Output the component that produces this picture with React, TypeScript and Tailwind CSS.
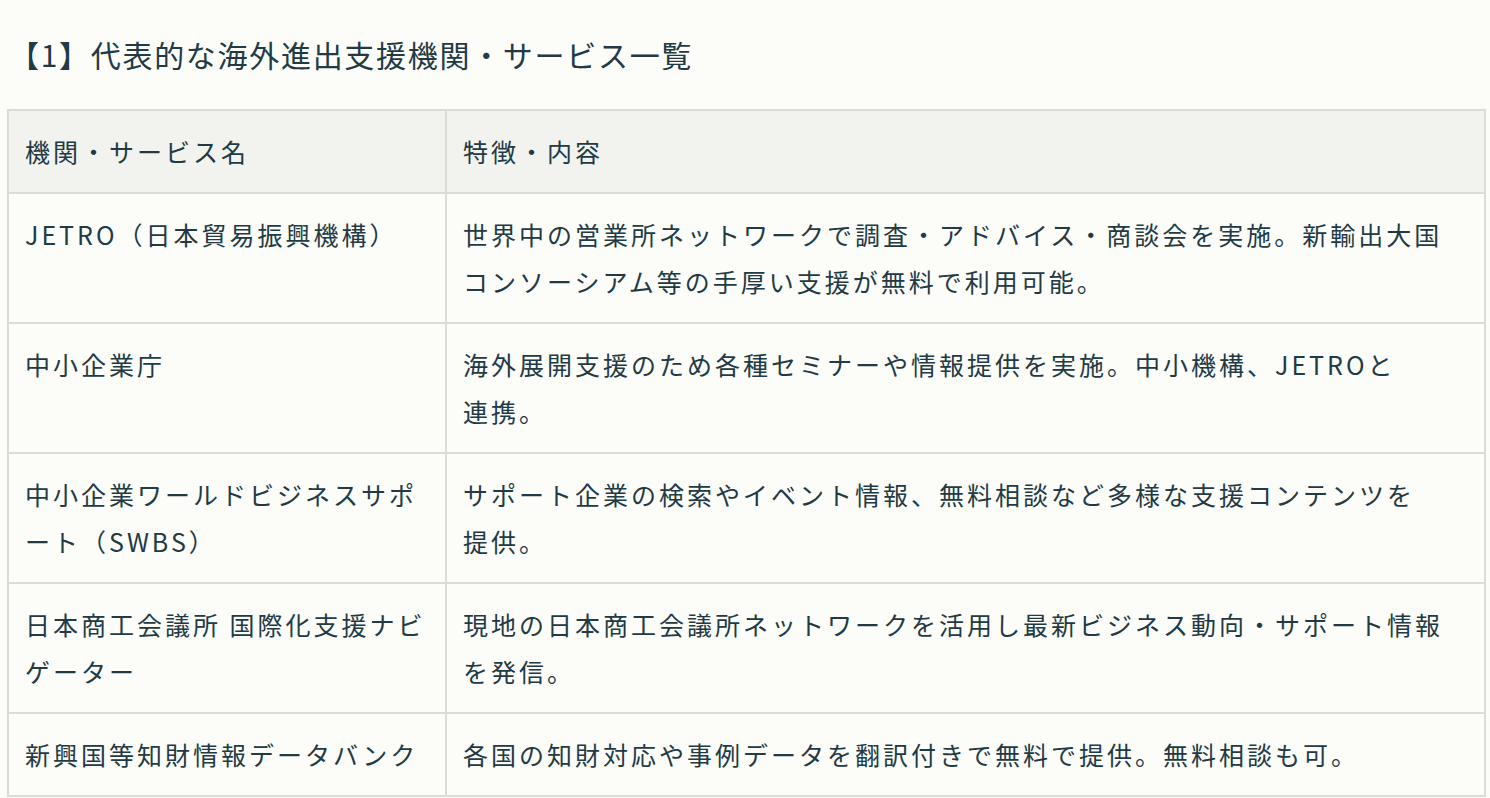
import React from "react";

const rows: { name: React.ReactNode; desc: React.ReactNode }[] = [
  {
    name: "JETRO（日本貿易振興機構）",
    desc: (
      <>
        世界中の営業所ネットワークで調査・アドバイス・商談会を実施。新輸出大国
        <br />
        コンソーシアム等の手厚い支援が無料で利用可能。
      </>
    ),
  },
  {
    name: "中小企業庁",
    desc: (
      <>
        海外展開支援のため各種セミナーや情報提供を実施。中小機構、JETROと
        <br />
        連携。
      </>
    ),
  },
  {
    name: (
      <>
        中小企業ワールドビジネスサポ
        <br />
        ート（SWBS）
      </>
    ),
    desc: (
      <>
        サポート企業の検索やイベント情報、無料相談など多様な支援コンテンツを
        <br />
        提供。
      </>
    ),
  },
  {
    name: (
      <>
        日本商工会議所 国際化支援ナビ
        <br />
        ゲーター
      </>
    ),
    desc: (
      <>
        現地の日本商工会議所ネットワークを活用し最新ビジネス動向・サポート情報
        <br />
        を発信。
      </>
    ),
  },
  {
    name: "新興国等知財情報データバンク",
    desc: "各国の知財対応や事例データを翻訳付きで無料で提供。無料相談も可。",
  },
];

export default function App() {
  return (
    <div
      className="min-h-[798px] w-full bg-[#fcfcf9] text-[#213a44] overflow-hidden"
      style={{ fontFamily: '"Noto Sans CJK JP", "Noto Sans", sans-serif' }}
    >
      <h1 className="pl-[9px] pt-[32px] text-[30px] leading-[45px] tracking-[1.7px] font-normal whitespace-nowrap">
        【1】代表的な海外進出支援機関・サービス一覧
      </h1>
      <table className="ml-[7px] mt-[32px] w-[1479px] table-fixed border-collapse text-[25px] leading-[47px] tracking-[3px]">
        <colgroup>
          <col className="w-[438px]" />
          <col />
        </colgroup>
        <thead>
          <tr className="bg-[#f2f2ee]">
            <th className="border-2 border-[#dcdcd5] px-[16px] py-[17px] text-left font-normal whitespace-nowrap">
              機関・サービス名
            </th>
            <th className="border-2 border-[#dcdcd5] px-[16px] py-[17px] text-left font-normal whitespace-nowrap">
              特徴・内容
            </th>
          </tr>
        </thead>
        <tbody>
          {rows.map((r, i) => (
            <tr key={i}>
              <td className="border-2 border-[#dcdcd5] px-[16px] py-[17px] align-top whitespace-nowrap">
                {r.name}
              </td>
              <td className="border-2 border-[#dcdcd5] px-[16px] py-[17px] align-top whitespace-nowrap">
                {r.desc}
              </td>
            </tr>
          ))}
        </tbody>
      </table>
    </div>
  );
}
